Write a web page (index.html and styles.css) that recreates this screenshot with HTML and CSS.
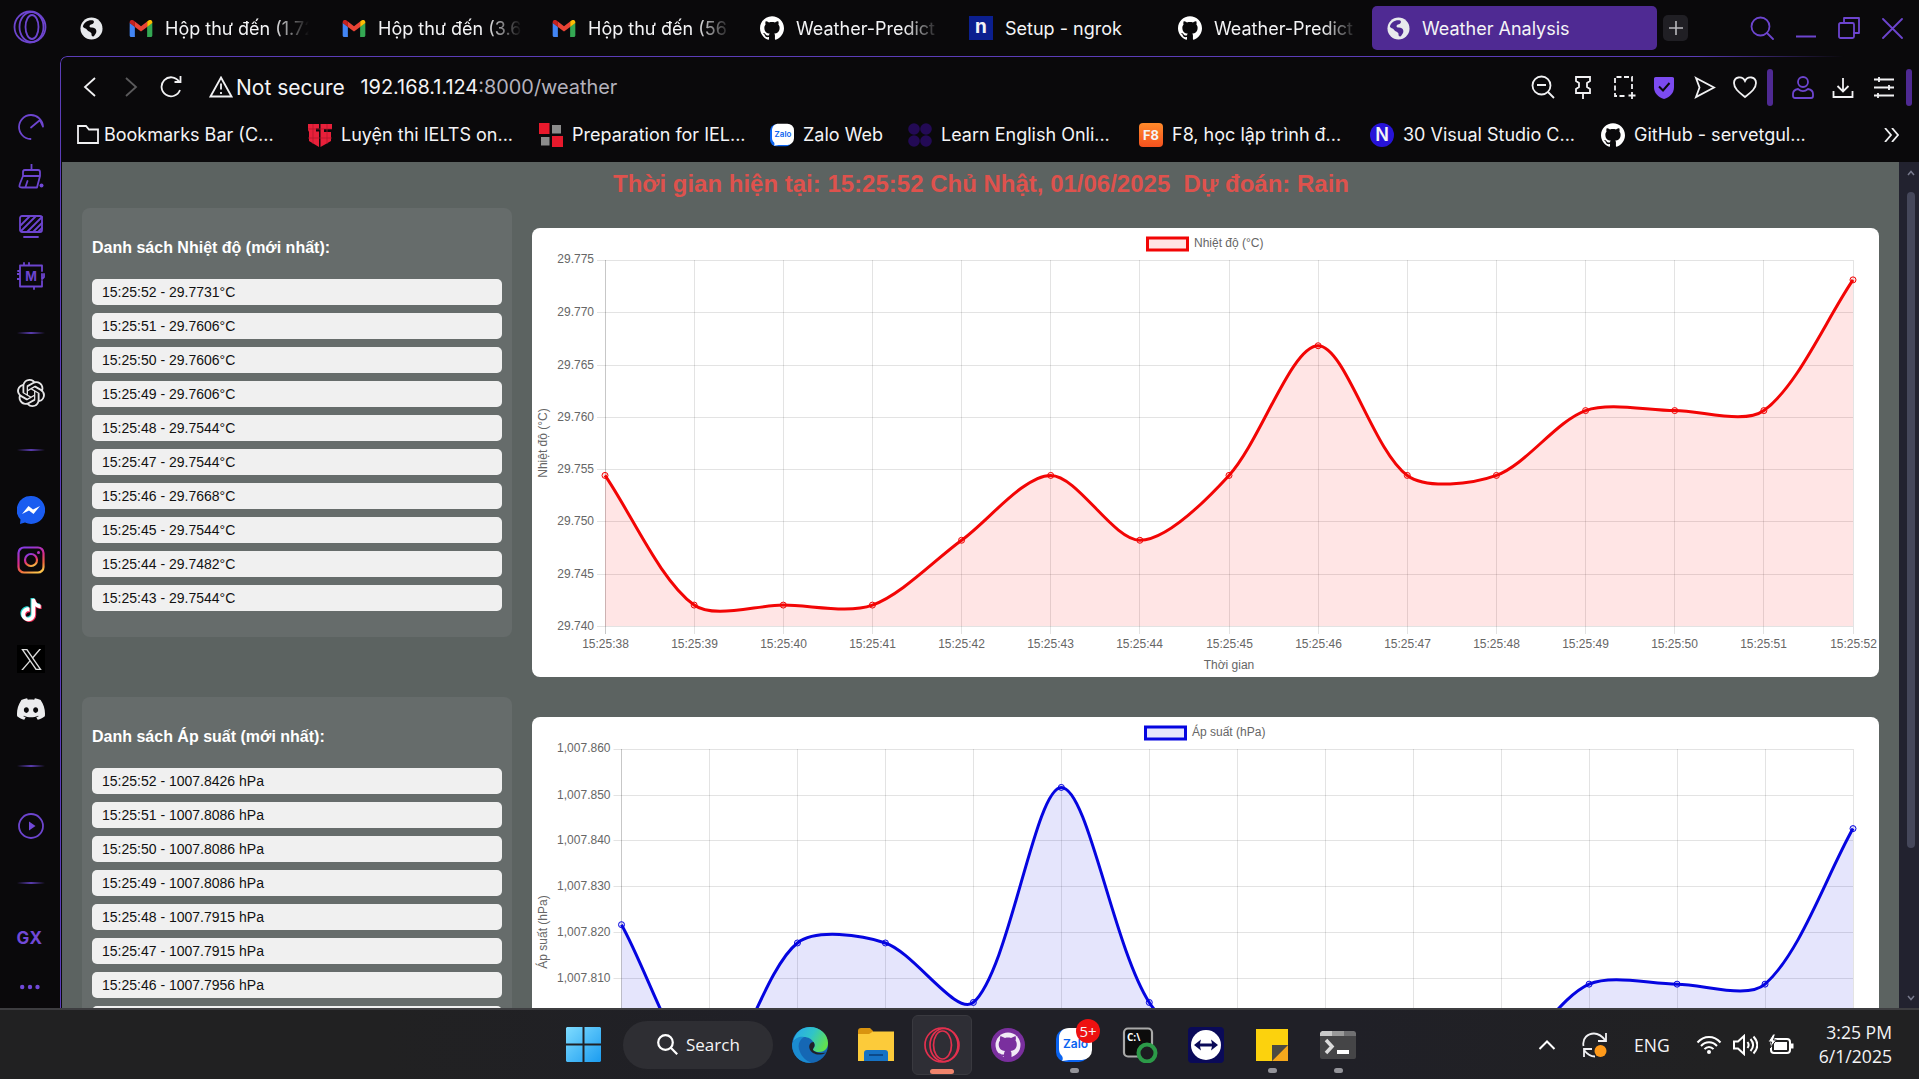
FILE: index.html
```html
<!DOCTYPE html>
<html lang="vi">
<head>
<meta charset="utf-8">
<title>Weather Analysis</title>
<link rel="stylesheet" href="styles.css">
</head>
<body>
<svg class="defs" width="0" height="0" aria-hidden="true">
  <defs>
    <symbol id="github" viewBox="0 0 24 24"><path d="M12 .297c-6.63 0-12 5.373-12 12 0 5.303 3.438 9.8 8.205 11.385.6.113.82-.258.82-.577 0-.285-.01-1.04-.015-2.04-3.338.724-4.042-1.61-4.042-1.61C4.422 18.07 3.633 17.7 3.633 17.7c-1.087-.744.084-.729.084-.729 1.205.084 1.838 1.236 1.838 1.236 1.07 1.835 2.809 1.305 3.495.998.108-.776.417-1.305.76-1.605-2.665-.3-5.466-1.332-5.466-5.93 0-1.31.465-2.38 1.235-3.22-.135-.303-.54-1.523.105-3.176 0 0 1.005-.322 3.3 1.23.96-.267 1.98-.399 3-.405 1.02.006 2.04.138 3 .405 2.28-1.552 3.285-1.23 3.285-1.23.645 1.653.24 2.873.12 3.176.765.84 1.23 1.91 1.23 3.22 0 4.61-2.805 5.625-5.475 5.92.42.36.81 1.096.81 2.22 0 1.606-.015 2.896-.015 3.286 0 .315.21.69.825.57C20.565 22.092 24 17.592 24 12.297c0-6.627-5.373-12-12-12"/></symbol>
    <symbol id="gmail" viewBox="0 0 24 18"><path fill="#4285f4" d="M0 3v13.4C0 17.3.7 18 1.6 18H5.500V7.100z"/><path fill="#34a853" d="M24 3v13.400c0 .9-.7 1.600-1.600 1.600H18.500V7.100z"/><path fill="#fbbc04" d="M18.500 1.700v5.600L24 3.200V2.400C24 .2 21.600-.8 19.900.5z"/><path fill="#c5221f" d="M0 2.400v.8l5.500 4.100V1.700L4.100.5C2.400-.8 0 .2 0 2.400z"/><path fill="#ea4335" d="M5.500 7.300V1.700L12 6.600l6.500-4.900v5.600L12 12.200z"/></symbol>
    <symbol id="globe" viewBox="0 0 24 24"><circle cx="12" cy="12" r="11.500" fill="#e8eaed"/><path fill="currentColor" d="M13 3.500c2 .5 2 2.500.5 3.500-1.500 1-3 .5-3.500 2-.4 1.500 1 2 2.500 2 2 0 4 1 4.500 3 .5 2.200-1 3.500-1.800 5-.7 1.200-1.700 1.700-2.700.8-.8-.8-.2-2-.8-3.100-.9-1.500-3.200-1.600-4.200-3.200C6.300 11.500 3.500 12 3 10c1-4 5-7 10-6.500z"/></symbol>
    <symbol id="zalo" viewBox="0 0 36 36"><rect x="0" y="2" width="33" height="33" rx="10" fill="#0a63f0"/><path fill="#fff" d="M13 1h13a10 10 0 0 1 10 10v12a10 10 0 0 1-10 10H13l-7 1c1-2 1-3 0-5-2-2-3-4-3-7V11c0-6 4-10 10-10z"/><text x="19.500" y="21" text-anchor="middle" class="zalo-word">Zalo</text></symbol>
  </defs>
</svg>
<div class="desktop">
  <div class="browser">
    <aside class="sidebar">
      <div class="side-logo"><svg width="34" height="34" viewBox="0 0 34 34"><g class="ln"><circle cx="17" cy="17" r="15.500"/><ellipse cx="18.500" cy="17" rx="12" ry="15"/><ellipse cx="19" cy="17" rx="6.500" ry="12"/></g></svg></div>
      <div class="cell"><svg width="26" height="26" viewBox="0 0 26 26"><path class="ln" d="M12.500 25A12 12 0 1 1 25 12.500l-3-6.500-9 7.500"/></svg></div>
      <div class="cell"><svg width="26" height="26" viewBox="0 0 26 26"><g class="ln"><path d="M13.500 0v6M7 6h13c2 0 2 1 2 2v4H5V8c0-1 0-2 2-2zM5 12h17l-3 11.500H4c-3 0-3-1-2-4zM9.500 17L7.500 23"/></g><circle cx="23.500" cy="21.500" r="2" class="fl"/></svg></div>
      <div class="cell"><svg width="26" height="26" viewBox="0 0 26 26"><g class="ln"><rect x="2" y="3" width="22" height="16" rx="2"/><path d="M6 24h14M3 12l9-9M3 18L18 3M9 19L24 4M15 19l9-9M20 19l4-4"/></g></svg></div>
      <div class="cell"><svg width="28" height="28" viewBox="0 0 28 28"><path class="ln" d="M25 9V3.500H3v21h22V19M7 3.500V1m5 2.500V1M3 12H0m3 5H0m3-8H1M17 24.500V27M25 12v5l2-2v-3"/><text x="14" y="18.500" text-anchor="middle" class="chip">M</text></svg></div>
      <i class="sep"></i>
      <div class="cell"><svg width="28" height="28" viewBox="0 0 24 24" fill="#e4e4e6"><path d="M22.2819 9.8211a5.9847 5.9847 0 0 0-.5157-4.9108 6.0462 6.0462 0 0 0-6.5098-2.9A6.0651 6.0651 0 0 0 4.9807 4.1818a5.9847 5.9847 0 0 0-3.9977 2.9 6.0462 6.0462 0 0 0 .7427 7.0966 5.98 5.98 0 0 0 .511 4.9107 6.051 6.051 0 0 0 6.5146 2.9001A5.9847 5.9847 0 0 0 13.2599 24a6.0557 6.0557 0 0 0 5.7718-4.2058 5.9894 5.9894 0 0 0 3.9977-2.9001 6.0557 6.0557 0 0 0-.7475-7.0729zm-9.022 12.6081a4.4755 4.4755 0 0 1-2.8764-1.0408l.1419-.0804 4.7783-2.7582a.7948.7948 0 0 0 .3927-.6813v-6.7369l2.02 1.1686a.071.071 0 0 1 .038.052v5.5826a4.504 4.504 0 0 1-4.4945 4.4944zm-9.6607-4.1254a4.4708 4.4708 0 0 1-.5346-3.0137l.142.0852 4.783 2.7582a.7712.7712 0 0 0 .7806 0l5.8428-3.3685v2.3324a.0804.0804 0 0 1-.0332.0615L9.74 19.9502a4.4992 4.4992 0 0 1-6.1408-1.6464zM2.3408 7.8956a4.485 4.485 0 0 1 2.3655-1.9728V11.6a.7664.7664 0 0 0 .3879.6765l5.8144 3.3543-2.0201 1.1685a.0757.0757 0 0 1-.071 0l-4.8303-2.7865A4.504 4.504 0 0 1 2.3408 7.872zm16.5963 3.8558L13.1038 8.364 15.1192 7.2a.0757.0757 0 0 1 .071 0l4.8303 2.7913a4.4944 4.4944 0 0 1-.6765 8.1042v-5.6772a.79.79 0 0 0-.407-.667zm2.0107-3.0231l-.142-.0852-4.7735-2.7818a.7759.7759 0 0 0-.7854 0L9.409 9.2297V6.8974a.0662.0662 0 0 1 .0284-.0615l4.8303-2.7866a4.4992 4.4992 0 0 1 6.6802 4.66zM8.3065 12.863l-2.02-1.1638a.0804.0804 0 0 1-.038-.0567V6.0742a4.4992 4.4992 0 0 1 7.3757-3.4537l-.142.0805L8.704 5.459a.7948.7948 0 0 0-.3927.6813zm1.0976-2.3654l2.602-1.4998 2.6069 1.4998v2.9994l-2.5974 1.4997-2.6067-1.4997Z"/></svg></div>
      <i class="sep"></i>
      <div class="cell"><svg width="28" height="28" viewBox="0 0 28 28"><path fill="#1a5cf0" d="M14 0a14 14 0 1 1-6 26.600L3 28l.5-4.500A14 14 0 0 1 14 0z"/><path fill="#fff" d="M5 18l6.500-8 4.500 3.500L23 10l-6.500 8-4.500-3.500z"/></svg></div>
      <div class="cell"><svg width="28" height="28" viewBox="0 0 28 28"><defs><linearGradient id="ig" x1="0.300" y1="0" x2="0.700" y2="1"><stop offset="0" stop-color="#8a3ae0"/><stop offset=".45" stop-color="#d82b8e"/><stop offset=".75" stop-color="#f0653c"/><stop offset="1" stop-color="#fbc04a"/></linearGradient></defs><g fill="none" stroke="url(#ig)" stroke-width="2.200"><rect x="1.500" y="1.500" width="25" height="25" rx="5.500"/><circle cx="14" cy="14" r="6"/></g><circle cx="21.500" cy="6.500" r="1.500" fill="#b435c0"/></svg></div>
      <div class="cell"><svg width="26" height="26" viewBox="-2 -1 28 26"><defs><path id="note" d="M12.525.02c1.31-.02 2.61-.01 3.91-.02.08 1.53.63 3.09 1.75 4.17 1.12 1.11 2.7 1.62 4.24 1.79v4.03c-1.44-.05-2.89-.35-4.2-.97-.57-.26-1.1-.59-1.62-.93-.01 2.92.01 5.84-.02 8.75-.08 1.4-.54 2.79-1.35 3.94-1.31 1.92-3.58 3.17-5.91 3.21-1.43.08-2.86-.31-4.08-1.03-2.02-1.19-3.44-3.37-3.65-5.71-.02-.5-.03-1-.01-1.49.18-1.9 1.12-3.72 2.58-4.96 1.66-1.44 3.98-2.13 6.15-1.72.02 1.48-.04 2.96-.04 4.44-.99-.32-2.15-.23-3.02.37-.63.41-1.11 1.04-1.36 1.75-.21.51-.15 1.07-.14 1.61.24 1.64 1.82 3.02 3.5 2.87 1.12-.01 2.19-.66 2.77-1.61.19-.33.4-.67.41-1.06.1-1.79.06-3.57.07-5.36.01-4.03-.01-8.05.02-12.07z"/></defs><use href="#note" x="-1" y="-1" fill="#25d4cf"/><use href="#note" x="1" y="1" fill="#f02c56"/><use href="#note" fill="#fff"/></svg></div>
      <div class="cell"><span class="xbox"><svg width="21" height="21" viewBox="0 0 24 24" fill="#dcdcdc"><path d="M14.234 10.162 22.977 0h-2.072l-7.591 8.824L7.251 0H.258l9.168 13.343L.258 24H2.33l8.016-9.318L16.749 24h6.993zm-2.837 3.299-.929-1.329L3.076 1.56h3.182l5.965 8.532.929 1.329 7.754 11.09h-3.182z"/></svg></span></div>
      <div class="cell"><svg width="28" height="28" viewBox="0 0 24 24" fill="#ececee"><path d="M20.317 4.3698a19.7913 19.7913 0 00-4.8851-1.5152.0741.0741 0 00-.0785.0371c-.211.3753-.4447.8648-.6083 1.2495-1.8447-.2762-3.68-.2762-5.4868 0-.1636-.3933-.4058-.8742-.6177-1.2495a.077.077 0 00-.0785-.037 19.7363 19.7363 0 00-4.8852 1.515.0699.0699 0 00-.0321.0277C.5334 9.0458-.319 13.5799.0992 18.0578a.0824.0824 0 00.0312.0561c2.0528 1.5076 4.0413 2.4228 5.9929 3.0294a.0777.0777 0 00.0842-.0276c.4616-.6304.8731-1.2952 1.226-1.9942a.076.076 0 00-.0416-.1057c-.6528-.2476-1.2743-.5495-1.8722-.8923a.077.077 0 01-.0076-.1277c.1258-.0943.2517-.1923.3718-.2914a.0743.0743 0 01.0776-.0105c3.9278 1.7933 8.18 1.7933 12.0614 0a.0739.0739 0 01.0785.0095c.1202.099.246.1981.3728.2924a.077.077 0 01-.0066.1276 12.2986 12.2986 0 01-1.873.8914.0766.0766 0 00-.0407.1067c.3604.698.7719 1.3628 1.225 1.9932a.076.076 0 00.0842.0286c1.961-.6067 3.9495-1.5219 6.0023-3.0294a.077.077 0 00.0313-.0552c.5004-5.177-.8382-9.6739-3.5485-13.6604a.061.061 0 00-.0312-.0286zM8.02 15.3312c-1.1825 0-2.1569-1.0857-2.1569-2.419 0-1.3332.9555-2.4189 2.157-2.4189 1.2108 0 2.1757 1.0952 2.1568 2.419 0 1.3332-.9555 2.4189-2.1569 2.4189zm7.9748 0c-1.1825 0-2.1569-1.0857-2.1569-2.419 0-1.3332.9554-2.4189 2.1569-2.4189 1.2108 0 2.1757 1.0952 2.1568 2.419 0 1.3332-.946 2.4189-2.1568 2.4189Z"/></svg></div>
      <i class="sep"></i>
      <div class="cell"><svg width="26" height="26" viewBox="0 0 26 26"><circle class="ln" cx="13" cy="13" r="12"/><path class="fl" d="M11 8.500l6.500 4.500-6.500 4.500z"/></svg></div>
      <i class="sep"></i>
      <div class="cell cell-gx">GX</div>
      <div class="cell cell-more"><svg width="20" height="6" viewBox="0 0 20 6" class="fl"><circle cx="2.200" cy="3" r="2.200"/><circle cx="10" cy="3" r="2.200"/><circle cx="17.500" cy="3" r="2.200"/></svg></div>
    </aside>

    <div class="window">
      <header class="tabs">
        <div class="tab"><svg class="globe" width="23" height="23"><use href="#globe"/></svg></div>
        <div class="tab"><svg width="24" height="17"><use href="#gmail"/></svg><span>Hộp thư đến (1.72</span></div>
        <div class="tab"><svg width="24" height="17"><use href="#gmail"/></svg><span>Hộp thư đến (3.6</span></div>
        <div class="tab"><svg width="24" height="17"><use href="#gmail"/></svg><span>Hộp thư đến (56</span></div>
        <div class="tab"><svg width="24" height="24" fill="#fff"><use href="#github"/></svg><span>Weather-Predict</span></div>
        <div class="tab plain"><b class="ngrok">n</b><span>Setup - ngrok</span></div>
        <div class="tab"><svg width="24" height="24" fill="#fff"><use href="#github"/></svg><span>Weather-Predict</span></div>
        <div class="tab active"><svg class="globe" width="23" height="23"><use href="#globe"/></svg><span>Weather Analysis</span></div>
        <button class="newtab"><svg width="14" height="14" viewBox="0 0 14 14"><path d="M7 0v14M0 7h14" stroke="#b8b8bc" stroke-width="1.600"/></svg></button>
        <div class="winctl">
          <svg width="24" height="24" viewBox="0 0 24 24"><g class="ln"><circle cx="10.500" cy="10.500" r="9"/><path d="M17 17l6 6"/></g></svg>
          <svg width="20" height="24" viewBox="0 0 20 24"><path class="ln" d="M0 20.500h20"/></svg>
          <svg width="22" height="22" viewBox="0 0 22 22"><g class="ln"><rect x="1" y="6" width="15" height="15" rx="1.500"/><path d="M6 6V1h15v15h-5"/></g></svg>
          <svg width="21" height="21" viewBox="0 0 21 21"><path class="ln" d="M1 1l19 19M20 1L1 20"/></svg>
        </div>
      </header>

      <div class="frame">
        <div class="address">
          <svg width="14" height="20" viewBox="0 0 14 20"><path class="wl" d="M12 1L2 10l10 9"/></svg>
          <svg class="dim" width="14" height="20" viewBox="0 0 14 20"><path class="wl" d="M2 1l10 9-10 9"/></svg>
          <svg width="22" height="22" viewBox="0 0 22 22"><path class="wl" d="M20 14a9.500 9.500 0 1 1-1-8.500M20.500 0v6h-6"/></svg>
          <svg width="24" height="22" viewBox="0 0 24 22"><path class="wl" d="M12 1.500L22.500 20.500H1.500zM12 7.500v6M12 16v2"/></svg>
          <span class="insecure">Not secure</span>
          <span class="url">192.168.1.124<em>:8000/weather</em></span>
          <div class="tools">
            <svg viewBox="0 0 24 24"><path class="wl" d="M17 17l6 6M6 10h9"/><circle class="wl" cx="10.500" cy="10.500" r="9"/></svg>
            <svg viewBox="0 0 24 24"><path class="wl" d="M5 2h14v4l-3 2v4l3 2v4H5v-4l3-2V8L5 6zM12 18v6"/></svg>
            <svg viewBox="0 0 24 24"><path class="wl" stroke-dasharray="5 2.500" d="M20 14V2H3v19h12"/><path class="wl" d="M20 17v7M16.500 20.500h7"/></svg>
            <svg viewBox="0 0 24 24"><path fill="#7c4bf0" d="M4 2h16c2 0 2 1 2 2v8c0 6-4 10-10 12C6 22 2 18 2 12V4c0-1 0-2 2-2z"/><path d="M7 11.500l4 4 6.500-7.500" fill="none" stroke="#0b0a0d" stroke-width="2"/></svg>
            <svg viewBox="0 0 24 24"><path class="wl" d="M3 3l18 9.500L3 22l3.500-9.500z"/></svg>
            <svg viewBox="0 0 24 24"><path class="wl" d="M12 22C7 18 1 14 1 8c0-6 8-8 11-2 3-6 11-4 11 2 0 6-6 10-11 14z"/></svg>
            <i class="vbar"></i>
            <svg viewBox="0 0 24 24"><g class="ln"><circle cx="12" cy="7" r="5"/><path d="M7 14c3 2.500 7 2.500 10 0 3 .5 5 2 5 5v2c0 1.500-1 2-2 2H4c-1 0-2-.5-2-2v-2c0-3 2-4.500 5-5z"/></g></svg>
            <svg viewBox="0 0 24 24"><path class="wl" d="M12 3v13M6.500 11l5.500 5.500 5.500-5.500M2.500 16v6h19v-6"/></svg>
            <svg viewBox="0 0 24 24"><path class="wl" d="M2 4.500h20M2 12.500h20M2 20.500h20M7 2v5M17 10v5M6 18v5"/></svg>
            <i class="vbar"></i>
          </div>
        </div>

        <nav class="bookmarks">
          <a><svg width="22" height="19" viewBox="0 0 22 19"><path class="wl" d="M1 1h8l3 3.500h9V18H1z"/></svg><span>Bookmarks Bar (C...</span></a>
          <a><svg width="24" height="24" viewBox="0 0 24 24"><path fill="#e8203a" d="M0 1h11v4.500H8v3h3V24L1 18V9L0 7zM12.500 1H24v5h-8v3h7v9l-10.500 6z"/><path stroke="#b0182c" stroke-width=".7" d="M0 6h24M0 15h24M5 1v20M19 1v20"/></svg><span>Luyện thi IELTS on...</span></a>
          <a><svg width="24" height="24" viewBox="0 0 24 24"><path fill="#e8192c" d="M0 0h10.500v11H0zM13 13h11v11H13z"/><path fill="#8b8b8b" d="M13 2h9v8.500h-9zM2 14h8.500v8.500H2z"/></svg><span>Preparation for IEL...</span></a>
          <a class="short"><svg width="24" height="24"><use href="#zalo"/></svg><span>Zalo Web</span></a>
          <a><svg width="24" height="24" viewBox="0 0 24 24" fill="#230a55"><circle cx="6" cy="6" r="5.800"/><circle cx="18" cy="6" r="5.800"/><circle cx="6" cy="18" r="5.800"/><circle cx="18" cy="18" r="5.800"/></svg><span>Learn English Onli...</span></a>
          <a><b class="f8">F8</b><span>F8, học lập trình đ...</span></a>
          <a><b class="nn">N</b><span>30 Visual Studio C...</span></a>
          <a><svg width="24" height="24" fill="#fff"><use href="#github"/></svg><span>GitHub - servetgul...</span></a>
          <svg class="more" width="15" height="14" viewBox="0 0 15 14"><path class="wl" d="M1 0l6 7-6 7M8 0l6 7-6 7"/></svg>
        </nav>

        <div class="viewport">
          <main class="page">
            <h1>Thời gian hiện tại: 15:25:52 Chủ Nhật, 01/06/2025&nbsp; Dự đoán: Rain</h1>
            <section class="row">
              <div class="panel">
                <h3>Danh sách Nhiệt độ (mới nhất):</h3>
                <ul>
                  <li>15:25:52 - 29.7731°C</li>
                  <li>15:25:51 - 29.7606°C</li>
                  <li>15:25:50 - 29.7606°C</li>
                  <li>15:25:49 - 29.7606°C</li>
                  <li>15:25:48 - 29.7544°C</li>
                  <li>15:25:47 - 29.7544°C</li>
                  <li>15:25:46 - 29.7668°C</li>
                  <li>15:25:45 - 29.7544°C</li>
                  <li>15:25:44 - 29.7482°C</li>
                  <li>15:25:43 - 29.7544°C</li>
                </ul>
              </div>
              <svg class="chart" id="temperature" width="1347" height="449"></svg>
            </section>
            <section class="row">
              <div class="panel">
                <h3>Danh sách Áp suất (mới nhất):</h3>
                <ul>
                  <li>15:25:52 - 1007.8426 hPa</li>
                  <li>15:25:51 - 1007.8086 hPa</li>
                  <li>15:25:50 - 1007.8086 hPa</li>
                  <li>15:25:49 - 1007.8086 hPa</li>
                  <li>15:25:48 - 1007.7915 hPa</li>
                  <li>15:25:47 - 1007.7915 hPa</li>
                  <li>15:25:46 - 1007.7956 hPa</li>
                  <li></li>
                </ul>
              </div>
              <svg class="chart" id="pressure" width="1347" height="449"></svg>
            </section>
          </main>
          <div class="scrollbar">
            <svg width="8" height="6" viewBox="0 0 8 6"><path d="M1 5l3-3.500L7 5" fill="none" stroke="#77798c" stroke-width="1.500"/></svg>
            <i class="thumb"></i>
            <svg width="8" height="6" viewBox="0 0 8 6"><path d="M1 1l3 3.500L7 1" fill="none" stroke="#77798c" stroke-width="1.500"/></svg>
          </div>
        </div>
      </div>
    </div>
  </div>

  <footer class="taskbar">
    <div class="apps">
      <div class="tile start"><svg width="35" height="35" viewBox="0 0 35 35"><defs><linearGradient id="win" x1="0" y1="0" x2="1" y2="1"><stop offset="0" stop-color="#7fdcff"/><stop offset="1" stop-color="#1b9cf0"/></linearGradient></defs><path fill="url(#win)" d="M1 0h15.500v16.500H0V1zM18.500 0H34l1 1v15.500H18.500zM0 18.500h16.500V35H1l-1-1zM18.500 18.500H35V34l-1 1H18.500z"/></svg></div>
      <div class="search"><svg width="21" height="21" viewBox="0 0 21 21"><g fill="none" stroke="#fff" stroke-width="2.200"><circle cx="8.500" cy="8.500" r="7.300"/><path d="M13.800 13.800l6.400 6.400"/></g></svg><span>Search</span></div>
      <div class="tile"><svg width="36" height="36" viewBox="0 0 36 36"><defs><linearGradient id="e1" x1="0" y1=".2" x2="1" y2=".6"><stop offset="0" stop-color="#28a8ea"/><stop offset=".5" stop-color="#30c4c8"/><stop offset="1" stop-color="#62e24c"/></linearGradient></defs><circle cx="18" cy="18" r="18" fill="#1567b4"/><path fill="url(#e1)" d="M1 15C3 5 10 0 18 0c10 0 18 7 18 16 0 6-4 9-9 9-4 0-7-1-6-3 2-2 2-4 1-6-2-4-6-6-10-6-5 0-9 2-11 5z"/><path fill="#1b8bd0" d="M0 17c2-6 8-8 12-7-5 3-7 9-4 15 2 5 6 9 11 10.500C9 37 0 29 0 17z"/><path fill="#202027" d="M36 25c-4 1.500-9 1.500-13-.5-2-1-2.500-2-1.500-3.500 1.500-2 1.500-4 0-6-3 0-5 3-4 6.500 1 4 6 6.500 11 6 3-.3 4-1 6-2.200z"/></svg></div>
      <div class="tile"><svg width="36" height="34" viewBox="0 0 36 34"><path fill="#d9940f" d="M0 3c0-2 1-3 3-3h9l3 3v6H0z"/><path fill="#fccb3a" d="M0 6h11l4-2.500h21V33H0z"/><path fill="#1672c4" d="M6 25c0-2 1-3 3-3h18c2 0 3 1 3 3v8H6z"/><path stroke="#0c4a8a" stroke-width="2" d="M11 27h14"/></svg></div>
      <div class="tile current"><svg width="36" height="36" viewBox="0 0 36 36"><g fill="none" stroke="#e4304e" stroke-width="1.700"><circle cx="18" cy="18" r="17"/><ellipse cx="20" cy="18" rx="14" ry="16.500"/><ellipse cx="18.500" cy="18" rx="9" ry="14"/></g></svg><i></i></div>
      <div class="tile"><svg width="34" height="34" viewBox="0 0 34 34"><circle cx="17" cy="17" r="17" fill="#7a2f9e"/><circle cx="17" cy="17" r="12.500" fill="#f2eaf6"/><path fill="#7a2f9e" d="M9.500 8l4.500 2c2-.6 4-.6 6 0l4.500-2c.6 2 .5 3 0 4.500 1 1.300 1.500 3 1.200 5-.5 3.500-3 5-6.200 5.500 1 1 1 2 1 3.500v3.500c-2.500.8-5 .8-7.500 0v-2c-4 .5-4-2-6-3 1.500-.6 3 2 6 1.500 0-1.500.3-2.500 1-3.500-3.200-.5-5.700-2-6.200-5.500-.3-2 .2-3.700 1.200-5C8.500 11 9 10 9.500 8z"/></svg></div>
      <div class="tile running"><svg width="36" height="36"><use href="#zalo"/></svg><b class="badge">5+</b><i></i></div>
      <div class="tile"><svg width="36" height="36" viewBox="0 0 36 36"><rect x="2" y="1.500" width="28" height="28" rx="4" fill="#0c0c0c" stroke="#a9a9a9" stroke-width="2.200"/><text x="5" y="14" class="cmd">C:\</text><circle cx="25" cy="26" r="8.500" fill="#1c1c20" stroke="#2c9a48" stroke-width="4"/></svg></div>
      <div class="tile"><svg width="36" height="36" viewBox="0 0 36 36"><rect width="36" height="36" rx="4" fill="#0a0a58"/><circle cx="18" cy="18" r="15" fill="#fff"/><path fill="#0a0a58" d="M6 18l7-5.500-1 4h12l-1-4 7 5.500-7 5.500 1-4H12l1 4z"/></svg></div>
      <div class="tile running"><svg width="32" height="32" viewBox="0 0 32 32"><path fill="#fcd20d" d="M0 0h32v16H16v16H0z"/><path fill="#4b4a42" d="M16 16h16L16 32z"/><path fill="#f5a81c" d="M32 16v16H16z"/></svg><i></i></div>
      <div class="tile running"><svg width="36" height="28" viewBox="0 0 36 28"><rect width="36" height="28" rx="2" fill="#454547"/><path fill="#c9c9c9" d="M0 5V2l2-2h10v5z"/><path fill="#9a9a9a" d="M12 0h12v5H12z"/><path fill="#707072" d="M24 0h10l2 2v3H24z"/><path fill="none" stroke="#dcdcdc" stroke-width="3.500" d="M6 9l6 6.500L6 22"/><path stroke="#fff" stroke-width="4" d="M17 21h12"/></svg><i></i></div>
    </div>
    <div class="tray">
      <svg width="18" height="10" viewBox="0 0 18 10"><path class="tl" d="M1.500 9L9 1.500 16.500 9"/></svg>
      <svg width="26" height="26" viewBox="0 0 26 26"><path class="wl" d="M1.500 14C0 6 6 1.500 12 1.500c5 0 8 2.500 11.500 7M24 1v8h-8M2 25v-8h8M2 18c3 4 6 6.500 11 6.500"/><circle cx="18.500" cy="19" r="6" fill="#ff9a1a"/></svg>
      <span class="lang">ENG</span>
      <svg width="26" height="20" viewBox="0 0 26 20"><g class="tl"><path d="M1.500 7.500C8 0 18 0 24.500 7.500M5 11c4.500-5 11.500-5 16 0M8.500 14.200c2.500-3 6.500-3 9 0"/></g><circle cx="13" cy="17" r="2" fill="#fff"/></svg>
      <svg width="26" height="22" viewBox="0 0 26 22"><path class="tl" d="M2 7.500h4L12 2v18l-6-5.500H2zM15.500 8c1.500 2 1.500 4 0 6M18.500 5c3.500 4 3.500 8 0 12M21.500 2.500c5 5.500 5 11.500 0 17"/></svg>
      <svg width="26" height="22" viewBox="0 0 26 22"><rect class="tl" x="3" y="5" width="19" height="14" rx="3"/><rect x="6" y="8" width="13" height="8" fill="#fff"/><path fill="#fff" d="M23 9.500h2.500v5H23z"/><path fill="#fff" stroke="#202022" d="M5 0L0 8h3.500L2 14l6.500-8H5.500L7.500 0z"/></svg>
      <div class="clock"><span>3:25 PM</span><span>6/1/2025</span></div>
    </div>
  </footer>
</div>
<script src="charts.js"></script>
</body>
</html>
```
FILE: styles.css
```css
* { box-sizing: border-box; }
body { margin: 0; background: #0a090b; }
button { border: 0; padding: 0; }
svg { display: block; flex: none; }
.defs { position: absolute; }
.desktop {
  width: 1919px; height: 1079px; overflow: hidden;
  display: flex; flex-direction: column;
  font-family: Inter, "Noto Sans", sans-serif;
  color: #f4f4f6;
}
.browser { display: flex; height: 1008px; background: #0a090b; }
.ln { fill: none; stroke: #6d45cf; stroke-width: 1.8; stroke-linejoin: round; stroke-linecap: round; }
.fl { fill: #7149d8; }
.wl { fill: none; stroke: #f1f1f3; stroke-width: 1.8; }
.dim { opacity: .35; }

.sidebar { width: 60px; display: flex; flex-direction: column; align-items: center; padding-left: 2px; flex: none; }
.side-logo { height: 102px; padding-top: 10px; margin-right: 3px; flex: none; }
.cell { height: 49.7px; display: flex; align-items: center; justify-content: center; flex: none; }
.cell-gx { height: 38px; color: #7149d8; font: 700 17px Inter, sans-serif; letter-spacing: .5px; margin-right: 3px; }
.cell-more { height: 61px; margin-right: 3px; }
.chip { font: 700 12.5px Inter, sans-serif; fill: #6d45cf; }
.sep { width: 28px; height: 2px; margin: 31px 0 34.5px; flex: none; background: linear-gradient(90deg, transparent, #5a3cb0, transparent); }
.xbox { width: 28px; height: 28px; background: #000; display: flex; align-items: center; justify-content: center; }

.window { flex: 1; min-width: 0; display: flex; flex-direction: column; }
.tabs { height: 56px; display: flex; align-items: center; padding-left: 20px; font-size: 18px; }
.tab { display: flex; align-items: center; gap: 12px; height: 44px; width: 209px; flex: none; white-space: nowrap; }
.tab:nth-child(1) { width: 49px; }
.tab:nth-child(2) { width: 213px; }
.tab:nth-child(3) { width: 210px; }
.tab:nth-child(4) { width: 208px; }
.tab:nth-child(7) { width: 194px; }
.tab span { width: 146px; -webkit-mask-image: linear-gradient(90deg, #000 108px, transparent 144px); mask-image: linear-gradient(90deg, #000 108px, transparent 144px); }
.tab.plain span, .tab.active span { width: auto; -webkit-mask-image: none; mask-image: none; }
.tab.active { width: 285px; background: #4f2a93; border-radius: 5px; padding-left: 15px; }
.globe { color: #0a090b; }
.active .globe { color: #4f2a93; }
.ngrok { width: 24px; height: 24px; background: #0b1f8f; display: flex; align-items: center; justify-content: center; font: 700 19px/20px Inter, sans-serif; padding-bottom: 3px; }
.newtab { width: 25px; height: 26px; margin-left: 6px; border-radius: 5px; background: #201f24; display: flex; align-items: center; justify-content: center; }
.winctl { margin-left: auto; display: flex; align-items: center; gap: 22px; padding-right: 16px; }

.frame { position: relative; flex: 1; display: flex; flex-direction: column; padding: 1px 0 0 2px; min-height: 0; }
.frame::before {
  content: ""; position: absolute; inset: 0; pointer-events: none;
  border: 1.5px solid #5b3db8; border-width: 1.5px 0 0 1.5px; border-radius: 7px 0 0 0;
  -webkit-mask-image: linear-gradient(90deg, #000 88%, transparent 96%);
  mask-image: linear-gradient(90deg, #000 88%, transparent 96%);
}
.address { height: 60px; display: flex; align-items: center; padding-left: 21px; font-size: 21px; }
.address > svg + svg { margin-left: 27px; }
.address > svg:nth-child(3) { margin-left: 22px; }
.insecure { margin-left: 3px; width: 124.500px; }
.url { font-size: 19.9px; }
.url em { font-style: normal; color: #b4b2bd; }
.tools { margin-left: auto; display: flex; align-items: center; gap: 16.500px; padding-right: 7px; }
.tools svg { width: 24px; height: 24px; }
.vbar { width: 6px; height: 37px; border-radius: 3px; background: #4f2a93; }
.tools .vbar:nth-child(7) { margin: 0 1px 0 -6.500px; }
.tools .vbar:last-child { margin-left: -6px; }

.bookmarks { height: 45px; display: flex; align-items: center; padding: 0 20px 10px 15px; font-size: 18px; }
.bookmarks a { display: flex; align-items: center; gap: 9px; width: 231px; flex: none; white-space: nowrap; }
.bookmarks a:first-child { gap: 5px; }
.bookmarks a.short { width: 138px; }
.bookmarks .more { margin-left: auto; }
.f8, .nn { width: 24px; height: 24px; display: flex; align-items: center; justify-content: center; }
.f8 { background: linear-gradient(#ff8a2a, #f4511e); border-radius: 4px; font-size: 13px; }
.nn { background: #2713d8; border-radius: 50%; font-weight: 600; font-size: 18px; }
.zalo-word { font: 600 12px Inter, sans-serif; fill: #0a63f0; }

.viewport { flex: 1; display: flex; min-height: 0; overflow: hidden; }
.page { flex: 1; background: #5c6361; font-family: "Liberation Sans", Arial, sans-serif; overflow: hidden; }
.page h1 { margin: 0; height: 46px; padding: 8px 0 0 1px; text-align: center; font-size: 24px; line-height: 28px; color: #de524d; white-space: pre; }
.row { display: flex; align-items: flex-start; padding: 0 20px 0 19.500px; height: 489px; }
.panel { width: 430.500px; height: 429px; overflow: hidden; flex: none; background: #666c6b; border-radius: 8px; padding: 31px 10px 0 10.500px; }
.panel h3 { margin: 0; height: 40px; font-size: 16px; line-height: 18px; color: #fff; }
.panel ul { list-style: none; margin: 0; padding: 0; display: flex; flex-direction: column; gap: 8px; }
.panel li { height: 26px; padding: 5px 10px; border-radius: 5px; background: #f0f0f0; color: #111; font-size: 14px; line-height: 16px; }
.chart { margin: 20px 0 0 20px; border-radius: 8px; background: #fff; font: 12px "Liberation Sans", Arial, sans-serif; }
.chart text { fill: #666; }
.scrollbar { width: 20px; flex: none; background: #22222f; display: flex; flex-direction: column; align-items: center; padding: 8px 0 7px 3px; }
.thumb { width: 8px; height: 656px; margin: 16px 0 auto; border-radius: 4px; background: #45475a; }

.taskbar { height: 71px; border-top: 2px solid #3d3d40; background: linear-gradient(90deg, #212122 0, #212122 20%, #202027 40%, #202027 70%, #212122 90%); display: flex; justify-content: space-between; font-family: "Open Sans", "Noto Sans", sans-serif; }
.apps { display: flex; align-items: center; gap: 6px; padding-left: 553px; }
.tile { position: relative; width: 60px; height: 60px; display: flex; align-items: center; justify-content: center; border-radius: 6px; }
.tile.current { background: #2e2e35; border: 1px solid #39393f; }
.tile i { position: absolute; left: 26px; bottom: 2px; width: 9px; height: 5px; border-radius: 3px; background: #94949a; }
.tile.current i { left: 17px; width: 24px; bottom: 0; background: #f0846c; }
.search { width: 150px; height: 48px; margin: 0 1px 0 4px; border-radius: 24px; background: #2e2e33; display: flex; align-items: center; gap: 8px; padding-left: 34px; font-size: 17px; }
.badge { position: absolute; left: 32px; top: 4px; width: 24px; height: 24px; border-radius: 50%; background: #ee1111; font: 500 15px/24px "Open Sans", sans-serif; text-align: center; }
.cmd { font: 700 10px "Open Sans", sans-serif; fill: #fff; }
.tray { display: flex; align-items: center; padding-right: 27px; }
.tl { fill: none; stroke: #fff; stroke-width: 2; }
.tray > svg:nth-child(2) { margin: 0 26px 0 26px; }
.lang { width: 62px; font-size: 17.500px; }
.tray > svg:nth-child(n+4) { margin-right: 10px; }
.clock { width: 88px; display: flex; flex-direction: column; align-items: flex-end; font-size: 17.600px; line-height: 24px; padding-bottom: 2px; }
```
FILE: charts.js
```js
const NS = "http://www.w3.org/2000/svg";

function add(parent, name, attrs, text) {
  const el = document.createElementNS(NS, name);
  for (const key in attrs) el.setAttribute(key, attrs[key]);
  if (text !== undefined) el.textContent = text;
  parent.appendChild(el);
  return el;
}

// Cubic control points for a smoothed line, weighted by neighbour distance.
function controls(prev, cur, next, tension) {
  const d01 = Math.hypot(cur.x - prev.x, cur.y - prev.y);
  const d12 = Math.hypot(next.x - cur.x, next.y - cur.y);
  const sum = d01 + d12 || 1;
  const a = tension * d01 / sum, b = tension * d12 / sum;
  return {
    before: { x: cur.x - a * (next.x - prev.x), y: cur.y - a * (next.y - prev.y) },
    after: { x: cur.x + b * (next.x - prev.x), y: cur.y + b * (next.y - prev.y) }
  };
}

function draw(id, o) {
  const svg = document.getElementById(id);
  const top = 32, bottom = 398, right = 1321, left = o.left;
  const step = (right - left) / (o.values.length - 1);
  const yOf = v => bottom - (v - o.min) / (o.max - o.min) * (bottom - top);
  const grid = "rgba(0,0,0,0.11)";

  for (let i = o.firstTick || 0; i <= o.ticks; i++) {
    const v = o.min + (o.max - o.min) * i / o.ticks;
    const y = Math.round(yOf(v)) + 0.5;
    add(svg, "path", { d: `M${left - 8} ${y}H${right}`, stroke: grid });
    const label = v.toLocaleString("en-US", { minimumFractionDigits: 3, maximumFractionDigits: 3 });
    add(svg, "text", { x: left - 11, y: y + (i === o.ticks ? 2.5 : 3.5), "text-anchor": "end" }, label);
  }
  o.values.forEach((v, i) => {
    const x = Math.round(left + i * step - 0.5) + 0.5;
    add(svg, "path", { d: `M${x} ${top}V${bottom + 8}`, stroke: i ? grid : "rgba(0,0,0,0.22)" });
    if (!o.firstTick) add(svg, "text", { x, y: bottom + 21.500, "text-anchor": "middle" }, "15:25:" + (38 + i));
  });

  const pts = o.values.map((v, i) => ({ x: left + i * step, y: yOf(v) }));
  const cps = pts.map((p, i) => controls(pts[i - 1] || p, p, pts[i + 1] || p, 0.3));
  const cap = y => Math.max(top, Math.min(bottom, y));
  let line = `M${pts[0].x} ${pts[0].y}`;
  for (let i = 1; i < pts.length; i++) {
    const a = cps[i - 1].after, b = cps[i].before;
    line += `C${a.x} ${cap(a.y)} ${b.x} ${cap(b.y)} ${pts[i].x} ${pts[i].y}`;
  }
  add(svg, "path", { d: `${line}L${right} ${bottom}L${left} ${bottom}Z`, fill: o.fill });
  add(svg, "path", { d: line, fill: "none", stroke: o.color, "stroke-width": 3 });
  pts.forEach(p => add(svg, "circle", { cx: p.x, cy: p.y, r: 3, fill: o.fill, stroke: o.color }));

  add(svg, "rect", { x: o.legend, y: 10, width: 40, height: 12, fill: o.fill, stroke: o.color, "stroke-width": 3 });
  add(svg, "text", { x: o.legend + 46.500, y: 19 }, o.title);
  if (!o.firstTick) add(svg, "text", { x: (left + right) / 2, y: 441, "text-anchor": "middle" }, "Thời gian");
  add(svg, "text", { transform: `translate(15 ${(top + bottom) / 2}) rotate(-90)`, "text-anchor": "middle" }, o.title);
}

draw("temperature", {
  left: 73, min: 29.74, max: 29.775, ticks: 7, legend: 615.5, title: "Nhiệt độ (°C)",
  color: "#f20505", fill: "rgba(255,0,0,0.1)",
  values: [29.7544, 29.742, 29.742, 29.742, 29.7482, 29.7544, 29.7482, 29.7544, 29.7668, 29.7544, 29.7544, 29.7606, 29.7606, 29.7606, 29.7731]
});
// The lower part of this chart is scrolled out of view, so its axis starts at the third tick.
draw("pressure", {
  left: 89.5, min: 1007.78, max: 1007.86, ticks: 8, firstTick: 3, legend: 613.5, title: "Áp suất (hPa)",
  color: "#0505e0", fill: "rgba(0,0,230,0.1)",
  values: [1007.8216, 1007.7874, 1007.8176, 1007.8176, 1007.8046, 1007.8516, 1007.8046, 1007.7915, 1007.7956, 1007.7915, 1007.7915, 1007.8086, 1007.8086, 1007.8086, 1007.8426]
});
```
